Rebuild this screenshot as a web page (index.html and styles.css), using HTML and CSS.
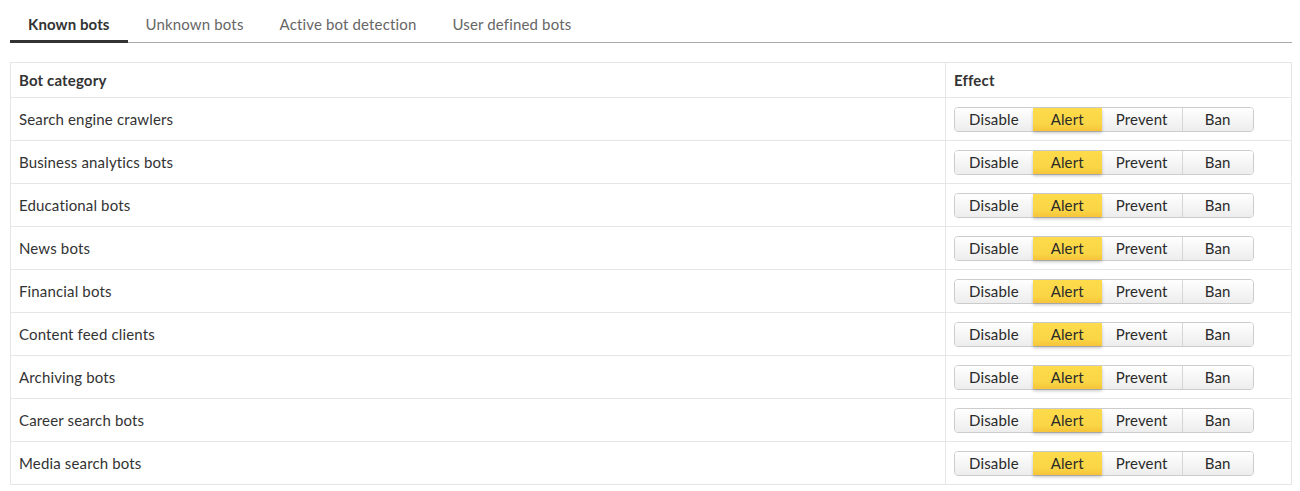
FILE: index.html
```html
<!DOCTYPE html>
<html>
<head>
<meta charset="utf-8">
<link rel="stylesheet" href="styles.css">
</head>
<body>
<div class="page">
  <nav class="tabs">
    <div class="tab active">Known bots</div>
    <div class="tab">Unknown bots</div>
    <div class="tab">Active bot detection</div>
    <div class="tab">User defined bots</div>
  </nav>
  <table class="bots">
    <thead>
      <tr><th class="cat">Bot category</th><th class="eff">Effect</th></tr>
    </thead>
    <tbody>
      <tr><td>Search engine crawlers</td><td class="eff"><div class="seg"><span class="btn">Disable</span><span class="btn on">Alert</span><span class="btn">Prevent</span><span class="btn">Ban</span></div></td></tr>
      <tr><td>Business analytics bots</td><td class="eff"><div class="seg"><span class="btn">Disable</span><span class="btn on">Alert</span><span class="btn">Prevent</span><span class="btn">Ban</span></div></td></tr>
      <tr><td>Educational bots</td><td class="eff"><div class="seg"><span class="btn">Disable</span><span class="btn on">Alert</span><span class="btn">Prevent</span><span class="btn">Ban</span></div></td></tr>
      <tr><td>News bots</td><td class="eff"><div class="seg"><span class="btn">Disable</span><span class="btn on">Alert</span><span class="btn">Prevent</span><span class="btn">Ban</span></div></td></tr>
      <tr><td>Financial bots</td><td class="eff"><div class="seg"><span class="btn">Disable</span><span class="btn on">Alert</span><span class="btn">Prevent</span><span class="btn">Ban</span></div></td></tr>
      <tr><td>Content feed clients</td><td class="eff"><div class="seg"><span class="btn">Disable</span><span class="btn on">Alert</span><span class="btn">Prevent</span><span class="btn">Ban</span></div></td></tr>
      <tr><td>Archiving bots</td><td class="eff"><div class="seg"><span class="btn">Disable</span><span class="btn on">Alert</span><span class="btn">Prevent</span><span class="btn">Ban</span></div></td></tr>
      <tr><td>Career search bots</td><td class="eff"><div class="seg"><span class="btn">Disable</span><span class="btn on">Alert</span><span class="btn">Prevent</span><span class="btn">Ban</span></div></td></tr>
      <tr><td>Media search bots</td><td class="eff"><div class="seg"><span class="btn">Disable</span><span class="btn on">Alert</span><span class="btn">Prevent</span><span class="btn">Ban</span></div></td></tr>
    </tbody>
  </table>
</div>
</body>
</html>
```
FILE: styles.css
```css
* { box-sizing: border-box; }
html, body { margin: 0; padding: 0; background: #fff; }
body {
  font-family: Lato, "Open Sans", "Liberation Sans", sans-serif;
  font-size: 15px;
  color: #333;
  letter-spacing: 0.15px;
}
.page {
  padding: 9px 8px 0 10px;
}
.tabs {
  display: flex;
  border-bottom: 1px solid #aaa;
  height: 34px;
}
.tab {
  padding: 6px 18px 0 18px;
  color: #666;
  line-height: 19px;
  font-size: 15px;
  letter-spacing: 0.15px;
  margin-bottom: -1px;
}
.tab.active {
  color: #333;
  font-weight: bold;
  letter-spacing: 0.1px;
  border-bottom: 3px solid #333;
}
.bots {
  margin-top: 19px;
  width: 100%;
  border-collapse: collapse;
  border: 1px solid #e6e6e6;
}
.bots th, .bots td {
  border: 1px solid #e6e6e6;
  text-align: left;
  padding: 0 8px;
}
.bots th {
  height: 35px;
  font-weight: bold;
  font-size: 15px;
}
.bots td {
  height: 43px;
}
.bots .cat { width: 935px; }
.seg {
  display: inline-flex;
  vertical-align: middle;
  border: 1px solid #ccc;
  border-radius: 4px;
  height: 25px;
  margin-top: 1px;
}
.btn {
  min-width: 69px;
  padding: 0 14px;
  text-align: center;
  line-height: 23px;
  color: #2a2a2a;
  background: linear-gradient(#ffffff, #ededed);
  border-left: 1px solid #d6d6d6;
}
.btn:first-child { border-left: none; border-radius: 3px 0 0 3px; }
.btn:last-child { border-radius: 0 3px 3px 0; min-width: 71px; }
.btn.on {
  background: linear-gradient(#fedb4b, #fad646 70%, #f6c43a);
  border-left: none;
  box-shadow: 0 2px 3px rgba(0,0,0,0.22);
  position: relative;
  z-index: 1;
}
.btn.on + .btn { border-left: none; }
```
